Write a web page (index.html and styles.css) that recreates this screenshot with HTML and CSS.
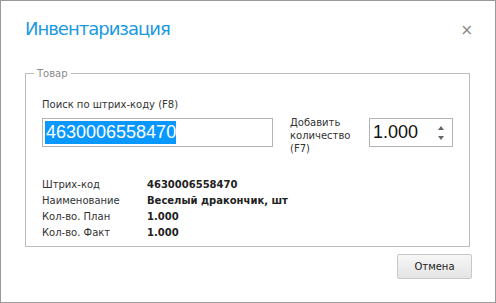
FILE: index.html
```html
<!DOCTYPE html>
<html lang="ru">
<head>
<meta charset="utf-8">
<title>Инвентаризация</title>
<link rel="stylesheet" href="styles.css">
</head>
<body>
<div class="window">
  <div class="header">
    <h1 class="title">Инвентаризация</h1>
    <span class="close">×</span>
  </div>
  <fieldset class="group">
    <legend class="legend">Товар</legend>
    <div class="group-body">
      <div class="search-label">Поиск по штрих-коду (F8)</div>
      <div class="input-row">
        <div class="barcode-input"><span class="selected">4630006558470</span></div>
        <div class="qty-label">Добавить<br>количество<br>(F7)</div>
        <div class="spin-input">
          <span class="spin-value">1.000</span>
          <span class="spin-arrows"><span class="arrow-up"></span><span class="arrow-down"></span></span>
        </div>
      </div>
      <div class="info">
        <div class="info-label">Штрих-код</div><div class="info-value">4630006558470</div>
        <div class="info-label">Наименование</div><div class="info-value">Веселый дракончик, шт</div>
        <div class="info-label">Кол-во. План</div><div class="info-value">1.000</div>
        <div class="info-label">Кол-во. Факт</div><div class="info-value">1.000</div>
      </div>
    </div>
  </fieldset>
  <div class="footer">
    <button class="btn">Отмена</button>
  </div>
</div>
</body>
</html>
```

FILE: styles.css
```css
html, body {
  margin: 0;
  padding: 0;
  background: #fff;
}
.window {
  width: 496px;
  height: 303px;
  box-sizing: border-box;
  border: 1px solid #9a9a9a;
  background: #fff;
  font-family: "DejaVu Sans", Verdana, sans-serif;
  font-size: 10px;
  color: #333;
}
.header {
  display: flex;
  justify-content: space-between;
  align-items: flex-start;
  padding: 16px 22px 0 24px;
  height: 49px;
  box-sizing: border-box;
}
.title {
  margin: 0;
  font-weight: normal;
  font-size: 18px;
  line-height: 24px;
  letter-spacing: -1px;
  color: #1a9ae0;
}
.close {
  font-size: 15px;
  line-height: 16px;
  color: #888;
  margin-top: 5px;
}
.group {
  margin: 17px 25px 0 24px;
  padding: 0;
  border: 1px solid #bdbdbd;
  height: 180px;
  box-sizing: border-box;
}
.legend {
  margin-left: 8px;
  padding: 0 3px;
  color: #8a8a8a;
  font-size: 10px;
  line-height: 13px;
}
.group-body {
  padding: 18px 15px 0 16px;
}
.search-label {
  line-height: 13px;
}
.input-row {
  display: flex;
  align-items: flex-start;
  margin-top: 7px;
}
.barcode-input {
  width: 231px;
  height: 29px;
  box-sizing: border-box;
  border: 1px solid #b3b3b3;
  padding: 2px 0 0 2px;
}
.selected {
  display: inline-block;
  background: #0898ff;
  color: #fff;
  font-family: "Liberation Sans", Arial, sans-serif;
  font-size: 18px;
  line-height: 23px;
  padding: 0 0 0 1px;
}
.qty-label {
  width: 62px;
  margin-left: 17px;
  line-height: 13px;
  margin-top: -2px;
}
.spin-input {
  margin-left: 17px;
  width: 84px;
  height: 29px;
  box-sizing: border-box;
  border: 1px solid #b3b3b3;
  display: flex;
  align-items: center;
  justify-content: space-between;
  padding: 0 8px 0 3px;
}
.spin-value {
  font-family: "Liberation Sans", Arial, sans-serif;
  font-size: 18px;
  color: #111;
}
.spin-arrows {
  display: flex;
  flex-direction: column;
  gap: 6px;
}
.arrow-up {
  width: 0;
  height: 0;
  border-left: 3px solid transparent;
  border-right: 3px solid transparent;
  border-bottom: 4px solid #666;
}
.arrow-down {
  width: 0;
  height: 0;
  border-left: 3px solid transparent;
  border-right: 3px solid transparent;
  border-top: 4px solid #666;
}
.info {
  display: grid;
  grid-template-columns: 105px auto;
  margin-top: 22px;
  line-height: 16px;
}
.info-value {
  font-weight: bold;
  color: #222;
}
.footer {
  display: flex;
  justify-content: flex-end;
  padding: 7px 23px 0 0;
}
.btn {
  width: 75px;
  height: 25px;
  border: 1px solid #c8c8c8;
  border-radius: 2px;
  background: linear-gradient(#f7f7f7, #e4e4e4);
  font-family: "DejaVu Sans", Verdana, sans-serif;
  font-size: 10px;
  color: #222;
  padding: 0;
}
```
